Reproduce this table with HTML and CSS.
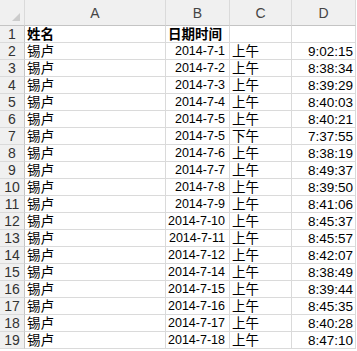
FILE: index.html
```html
<!DOCTYPE html>
<html>
<head>
<meta charset="utf-8">
<link rel="stylesheet" href="styles.css">
</head>
<body>
<div class="sheet">
  <div class="corner"><span class="tri"></span></div>
  <div class="colhead">A</div>
  <div class="colhead">B</div>
  <div class="colhead">C</div>
  <div class="colhead">D</div>

  <div class="rowhead">1</div><div class="cell bold">姓名</div><div class="cell bold">日期时间</div><div class="cell"></div><div class="cell"></div>
  <div class="rowhead">2</div><div class="cell">锡卢</div><div class="cell num date">2014-7-1</div><div class="cell">上午</div><div class="cell num">9:02:15</div>
  <div class="rowhead">3</div><div class="cell">锡卢</div><div class="cell num date">2014-7-2</div><div class="cell">上午</div><div class="cell num">8:38:34</div>
  <div class="rowhead">4</div><div class="cell">锡卢</div><div class="cell num date">2014-7-3</div><div class="cell">上午</div><div class="cell num">8:39:29</div>
  <div class="rowhead">5</div><div class="cell">锡卢</div><div class="cell num date">2014-7-4</div><div class="cell">上午</div><div class="cell num">8:40:03</div>
  <div class="rowhead">6</div><div class="cell">锡卢</div><div class="cell num date">2014-7-5</div><div class="cell">上午</div><div class="cell num">8:40:21</div>
  <div class="rowhead">7</div><div class="cell">锡卢</div><div class="cell num date">2014-7-5</div><div class="cell">下午</div><div class="cell num">7:37:55</div>
  <div class="rowhead">8</div><div class="cell">锡卢</div><div class="cell num date">2014-7-6</div><div class="cell">上午</div><div class="cell num">8:38:19</div>
  <div class="rowhead">9</div><div class="cell">锡卢</div><div class="cell num date">2014-7-7</div><div class="cell">上午</div><div class="cell num">8:49:37</div>
  <div class="rowhead">10</div><div class="cell">锡卢</div><div class="cell num date">2014-7-8</div><div class="cell">上午</div><div class="cell num">8:39:50</div>
  <div class="rowhead">11</div><div class="cell">锡卢</div><div class="cell num date">2014-7-9</div><div class="cell">上午</div><div class="cell num">8:41:06</div>
  <div class="rowhead">12</div><div class="cell">锡卢</div><div class="cell num date">2014-7-10</div><div class="cell">上午</div><div class="cell num">8:45:37</div>
  <div class="rowhead">13</div><div class="cell">锡卢</div><div class="cell num date">2014-7-11</div><div class="cell">上午</div><div class="cell num">8:45:57</div>
  <div class="rowhead">14</div><div class="cell">锡卢</div><div class="cell num date">2014-7-12</div><div class="cell">上午</div><div class="cell num">8:42:07</div>
  <div class="rowhead">15</div><div class="cell">锡卢</div><div class="cell num date">2014-7-14</div><div class="cell">上午</div><div class="cell num">8:38:49</div>
  <div class="rowhead">16</div><div class="cell">锡卢</div><div class="cell num date">2014-7-15</div><div class="cell">上午</div><div class="cell num">8:39:44</div>
  <div class="rowhead">17</div><div class="cell">锡卢</div><div class="cell num date">2014-7-16</div><div class="cell">上午</div><div class="cell num">8:45:35</div>
  <div class="rowhead">18</div><div class="cell">锡卢</div><div class="cell num date">2014-7-17</div><div class="cell">上午</div><div class="cell num">8:40:28</div>
  <div class="rowhead">19</div><div class="cell">锡卢</div><div class="cell num date">2014-7-18</div><div class="cell">上午</div><div class="cell num">8:47:10</div>
</div>
</body>
</html>
```
FILE: styles.css
```css
html, body {
  margin: 0;
  padding: 0;
  background: #ffffff;
}
.sheet {
  display: grid;
  grid-template-columns: 25px 141px 64px 62px 64px;
  grid-template-rows: 26px;
  grid-auto-rows: 17px;
  font-family: "Liberation Sans", Arial, "Noto Sans CJK SC", sans-serif;
  font-size: 13.5px;
  color: #000;
}
.sheet > div {
  box-sizing: border-box;
  border-right: 1px solid #dadada;
  border-bottom: 1px solid #dadada;
  white-space: nowrap;
  overflow: hidden;
}
.corner {
  background: #f0f0f0;
  position: relative;
  border-bottom-color: #c4c4c4 !important;
}
.tri {
  position: absolute;
  right: 4px;
  bottom: 4px;
  width: 0;
  height: 0;
  border-left: 8px solid transparent;
  border-bottom: 8px solid #cccccc;
}
.colhead {
  background: #f0f0f0;
  color: #444;
  font-size: 14px;
  text-align: center;
  line-height: 26px;
  border-bottom-color: #c4c4c4 !important;
}
.rowhead {
  background: #f0f0f0;
  color: #333;
  font-size: 14px;
  text-align: center;
  line-height: 17px;
  border-right-color: #c4c4c4 !important;
}
.cell {
  line-height: 17px;
  padding: 0 2px;
}
.bold {
  font-weight: bold;
}
.num {
  text-align: right;
}
.date {
  font-size: 12.5px;
  padding-right: 4px;
}
```
